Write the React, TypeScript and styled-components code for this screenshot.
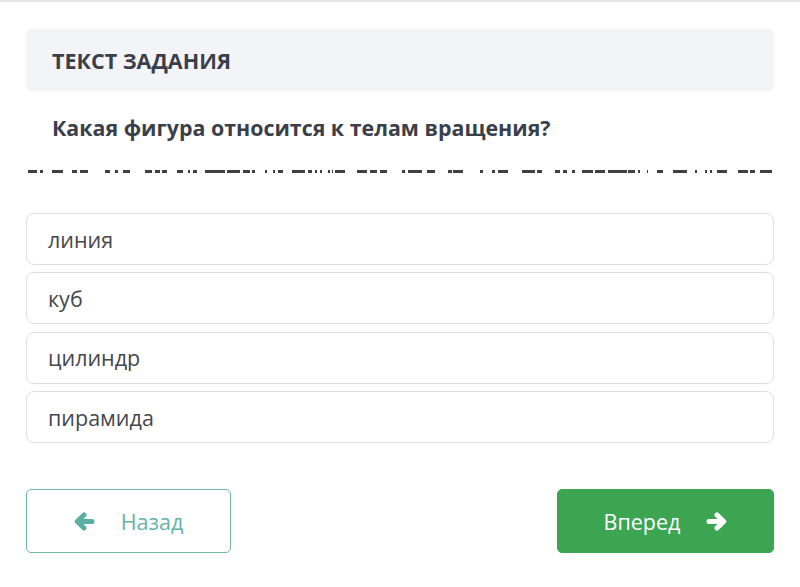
import { FC } from "react";
import styled, { createGlobalStyle } from "styled-components";

const GlobalStyle = createGlobalStyle`
    html, body {
        margin: 0;
        padding: 0;
        background: #ffffff;
    }
    body {
        font-family: "Open Sans", "Noto Sans", sans-serif;
    }
`;

const Page = styled.div`
    width: 800px;
    height: 587px;
    border-top: 2px solid #e6e6e6;
    box-sizing: border-box;
    padding: 27px 26px 0;
`;

const TaskHeader = styled.div`
    background: #f3f4f7;
    border-radius: 5px;
    height: 62px;
    display: flex;
    align-items: center;
    padding: 0 26px;
    font-size: 21.5px;
    font-weight: 700;
    color: #3b3f4a;
`;

const Question = styled.div`
    padding: 0 26px;
    margin-top: 22px;
    height: 30px;
    line-height: 30px;
    font-size: 21.4px;
    font-weight: 700;
    color: #3b3f4a;
`;

const Scratch = styled.div`
    position: relative;
    height: 3px;
    margin-top: 27px;
`;

const Dash = styled.span`
    position: absolute;
    top: 0;
    height: 2.5px;
    background: #3f3f45;
`;

const Options = styled.div`
    display: flex;
    flex-direction: column;
    gap: 7.4px;
    margin-top: 40px;
`;

const Option = styled.div`
    height: 52px;
    box-sizing: border-box;
    border: 1px solid #dedfe2;
    border-radius: 8px;
    display: flex;
    align-items: center;
    padding: 0 21px;
    font-size: 21.5px;
    color: #45474d;
`;

const Actions = styled.div`
    display: flex;
    justify-content: space-between;
    margin-top: 46px;
`;

const NavButton = styled.button<{ $primary?: boolean }>`
    height: 64px;
    box-sizing: border-box;
    border-radius: 5px;
    display: flex;
    align-items: center;
    justify-content: center;
    gap: 26px;
    font-family: inherit;
    font-size: 21.5px;
    cursor: pointer;
    width: ${p => (p.$primary ? "217px" : "205px")};
    border: 1px solid ${p => (p.$primary ? "#3ba552" : "#6fb8ae")};
    background: ${p => (p.$primary ? "#3ba552" : "#ffffff")};
    color: ${p => (p.$primary ? "#ffffff" : "#66b3aa")};
    svg {
        color: ${p => (p.$primary ? "#ffffff" : "#5aaea4")};
    }
`;

const Arrow: FC<{ flip?: boolean }> = ({ flip }) => (
    <svg
        width="21"
        height="19"
        viewBox="0 0 21 19"
        style={flip ? { transform: "scaleX(-1)" } : undefined}
    >
        <path
            d="M10 3 L3.2 9.5 L10 16 M3.5 9.5 H18"
            fill="none"
            stroke="currentColor"
            strokeWidth="5"
            strokeLinecap="round"
            strokeLinejoin="round"
        />
    </svg>
);

// bottom slice of a clipped text line, as it shows in the screenshot
const dashes: [number, number][] = [
    [28, 37], [40, 43], [52, 63], [72, 77], [80, 88], [105, 110], [115, 118],
    [123, 130], [145, 152], [155, 160], [162, 167], [177, 183], [188, 190],
    [193, 197], [205, 225], [227, 240], [243, 250], [252, 255], [265, 267],
    [273, 275], [278, 283], [292, 305], [308, 312], [315, 317], [320, 322],
    [328, 330], [332, 333], [335, 345], [357, 367], [370, 377], [380, 387],
    [402, 405], [408, 422], [427, 435], [448, 452], [453, 463], [480, 483],
    [492, 495], [498, 508], [522, 535], [537, 542], [555, 560], [563, 567],
    [572, 575], [582, 593], [595, 605], [608, 627], [628, 635], [638, 640],
    [647, 648], [657, 663], [673, 687], [695, 697], [705, 707], [710, 712],
    [717, 727], [738, 748], [750, 755], [760, 772],
];

const answers = ["линия", "куб", "цилиндр", "пирамида"];

const App: FC = () => {
    return (
        <Page>
            <GlobalStyle />
            <TaskHeader>ТЕКСТ ЗАДАНИЯ</TaskHeader>
            <Question>Какая фигура относится к телам вращения?</Question>
            <Scratch>
                {dashes.map(([a, b]) => (
                    <Dash key={a} style={{ left: a - 26, width: b - a }} />
                ))}
            </Scratch>
            <Options>
                {answers.map(a => (
                    <Option key={a}>{a}</Option>
                ))}
            </Options>
            <Actions>
                <NavButton>
                    <Arrow />
                    <span>Назад</span>
                </NavButton>
                <NavButton $primary>
                    <span>Вперед</span>
                    <Arrow flip />
                </NavButton>
            </Actions>
        </Page>
    );
};

export default App;
